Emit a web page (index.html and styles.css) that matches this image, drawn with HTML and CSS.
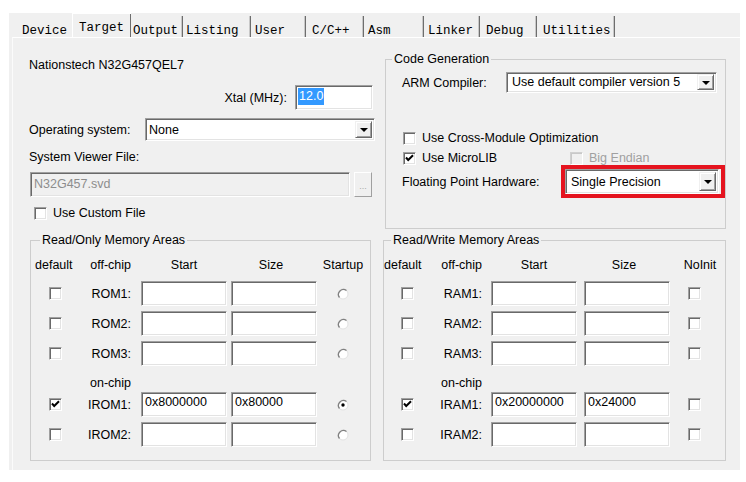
FILE: index.html
```html
<!DOCTYPE html>
<html>
<head>
<meta charset="utf-8">
<link rel="stylesheet" href="styles.css">
</head>
<body>
<div class="dialog">
  <div class="tabs">
    <div class="tab t-device">Device</div>
    <div class="tab tab-active t-target">Target</div>
    <div class="tab t-output">Output</div>
    <div class="tab t-listing">Listing</div>
    <div class="tab t-user">User</div>
    <div class="tab t-cpp">C/C++</div>
    <div class="tab t-asm">Asm</div>
    <div class="tab t-linker">Linker</div>
    <div class="tab t-debug">Debug</div>
    <div class="tab t-util">Utilities</div>
  </div>
  <div class="panel">
    <div class="top-row">
      <div class="target-info">
        <div class="device-name">Nationstech N32G457QEL7</div>
        <div class="xtal-row">
          <span>Xtal (MHz):</span>
          <div class="field xtal"><span class="sel">12.0</span></div>
        </div>
        <div class="os-row">
          <span class="os-label">Operating system:</span>
          <div class="field combo os-combo"><span class="combo-text">None</span><span class="dd-btn"></span></div>
        </div>
        <div class="svf-label">System Viewer File:</div>
        <div class="svd-row">
          <div class="field field-disabled svd">N32G457.svd</div>
          <div class="browse">...</div>
        </div>
        <div class="check-row custom-row"><span class="cb"></span><span>Use Custom File</span></div>
      </div>
      <fieldset class="group codegen">
        <legend>Code Generation</legend>
        <div class="cg-body">
          <div class="compiler-row">
            <span class="cg-label">ARM Compiler:</span>
            <div class="field combo compiler-combo"><span class="combo-text">Use default compiler version 5</span><span class="dd-btn"></span></div>
          </div>
          <div class="check-row cross-row"><span class="cb"></span><span>Use Cross-Module Optimization</span></div>
          <div class="microlib-row">
            <div class="check-row micro"><span class="cb cb-checked"><svg viewBox="0 0 11 11" width="11" height="11"><path d="M2 4.5 L4.2 7 L9 2.2" fill="none" stroke="#000" stroke-width="2"/></svg></span><span>Use MicroLIB</span></div>
            <div class="check-row disabled"><span class="cb cb-disabled"></span><span>Big Endian</span></div>
          </div>
          <div class="fp-row">
            <span>Floating Point Hardware:</span>
            <div class="highlight">
              <div class="field combo fp-combo"><span class="combo-text">Single Precision</span><span class="dd-btn"></span></div>
            </div>
          </div>
        </div>
      </fieldset>
    </div>
    <div class="bottom-row">
      <fieldset class="group mem rom">
        <legend>Read/Only Memory Areas</legend>
        <div class="memgrid">
          <span class="h-default">default</span><span class="h-off">off-chip</span><span class="h-c">Start</span><span class="h-c h-size">Size</span><span class="h-last">Startup</span>

          <span class="cb"></span><span class="lbl">ROM1:</span><span class="field mfield"></span><span class="field mfield"></span><span class="radio"><svg viewBox="0 0 12 12" width="12" height="12"><circle cx="6" cy="6" r="5" fill="#fff" stroke="#e2e2e2"/><path d="M9.5 2.5 A5 5 0 0 0 2.5 9.5" fill="none" stroke="#808080" stroke-width="1.3"/></svg></span>

          <span class="cb"></span><span class="lbl">ROM2:</span><span class="field mfield"></span><span class="field mfield"></span><span class="radio"><svg viewBox="0 0 12 12" width="12" height="12"><circle cx="6" cy="6" r="5" fill="#fff" stroke="#e2e2e2"/><path d="M9.5 2.5 A5 5 0 0 0 2.5 9.5" fill="none" stroke="#808080" stroke-width="1.3"/></svg></span>

          <span class="cb"></span><span class="lbl">ROM3:</span><span class="field mfield"></span><span class="field mfield"></span><span class="radio"><svg viewBox="0 0 12 12" width="12" height="12"><circle cx="6" cy="6" r="5" fill="#fff" stroke="#e2e2e2"/><path d="M9.5 2.5 A5 5 0 0 0 2.5 9.5" fill="none" stroke="#808080" stroke-width="1.3"/></svg></span>

          <span></span><span class="lbl onchip">on-chip</span><span></span><span></span><span></span>

          <span class="cb cb-checked"><svg viewBox="0 0 11 11" width="11" height="11"><path d="M2 4.5 L4.2 7 L9 2.2" fill="none" stroke="#000" stroke-width="2"/></svg></span><span class="lbl">IROM1:</span><span class="field mfield">0x8000000</span><span class="field mfield">0x80000</span><span class="radio"><svg viewBox="0 0 12 12" width="12" height="12"><circle cx="6" cy="6" r="5" fill="#fff" stroke="#e2e2e2"/><path d="M9.5 2.5 A5 5 0 0 0 2.5 9.5" fill="none" stroke="#808080" stroke-width="1.3"/><circle cx="6" cy="6" r="1.7" fill="#000"/></svg></span>

          <span class="cb"></span><span class="lbl">IROM2:</span><span class="field mfield"></span><span class="field mfield"></span><span class="radio"><svg viewBox="0 0 12 12" width="12" height="12"><circle cx="6" cy="6" r="5" fill="#fff" stroke="#e2e2e2"/><path d="M9.5 2.5 A5 5 0 0 0 2.5 9.5" fill="none" stroke="#808080" stroke-width="1.3"/></svg></span>
        </div>
      </fieldset>
      <fieldset class="group mem ram">
        <legend>Read/Write Memory Areas</legend>
        <div class="memgrid">
          <span class="h-default">default</span><span class="h-off">off-chip</span><span class="h-c">Start</span><span class="h-c h-size">Size</span><span class="h-last">NoInit</span>

          <span class="cb"></span><span class="lbl">RAM1:</span><span class="field mfield"></span><span class="field mfield"></span><span class="cb cb-end"></span>

          <span class="cb"></span><span class="lbl">RAM2:</span><span class="field mfield"></span><span class="field mfield"></span><span class="cb cb-end"></span>

          <span class="cb"></span><span class="lbl">RAM3:</span><span class="field mfield"></span><span class="field mfield"></span><span class="cb cb-end"></span>

          <span></span><span class="lbl onchip">on-chip</span><span></span><span></span><span></span>

          <span class="cb cb-checked"><svg viewBox="0 0 11 11" width="11" height="11"><path d="M2 4.5 L4.2 7 L9 2.2" fill="none" stroke="#000" stroke-width="2"/></svg></span><span class="lbl">IRAM1:</span><span class="field mfield">0x20000000</span><span class="field mfield">0x24000</span><span class="cb cb-end"></span>

          <span class="cb"></span><span class="lbl">IRAM2:</span><span class="field mfield"></span><span class="field mfield"></span><span class="cb cb-end"></span>
        </div>
      </fieldset>
    </div>
  </div>
</div>
</body>
</html>
```

FILE: styles.css
```css
html, body {
  margin: 0;
  background: #fff;
}
body {
  font-family: "Liberation Sans", Arial, sans-serif;
  font-size: 12.5px;
  color: #000;
}
.dialog {
  margin: 13px 0 0 9px;
  width: 731px;
  height: 457px;
  background: #f0f0f0;
  display: flex;
  flex-direction: column;
}

/* tabs */
.tabs {
  display: flex;
  height: 24px;
  padding-left: 5px;
  font-family: "Liberation Mono", "Courier New", monospace;
  font-size: 12.5px;
}
.tab {
  box-sizing: border-box;
  height: 24px;
  padding-top: 11px;
  line-height: 14px;
  white-space: pre;
  background-image: linear-gradient(to right, #c8c8c8 1px, #6e6e6e 1px);
  background-size: 2px 21px;
  background-position: right bottom;
  background-repeat: no-repeat;
}
.tab-active {
  padding-top: 8px;
  background-size: 1px 24px;
  box-shadow: inset 1px 0 0 #ffffff, inset 0 1px 0 #ffffff;
}
.t-device { width: 58px; padding-left: 8px; background-image: none; }
.t-target { width: 59px; padding-left: 7px; background-image: linear-gradient(#6e6e6e, #6e6e6e); }
.t-output { width: 52px; padding-left: 2px; }
.t-listing { width: 68px; padding-left: 3px; }
.t-user { width: 55px; padding-left: 4px; }
.t-cpp { width: 58px; padding-left: 6px; }
.t-asm { width: 60px; padding-left: 4px; }
.t-linker { width: 56px; padding-left: 4px; }
.t-debug { width: 57px; padding-left: 6px; }
.t-util { width: 78px; padding-left: 6px; }

/* panel */
.panel {
  flex: 1;
  margin-left: 3px;
  border-top: 1px solid #ffffff;
  border-left: 1px solid #fbfbfb;
  padding-left: 16px;
}
.top-row {
  display: flex;
  gap: 10px;
  align-items: flex-start;
}
.target-info {
  width: 346px;
  margin-top: 19px;
  display: flex;
  flex-direction: column;
}
.device-name {
  line-height: 16px;
}
.xtal-row {
  display: flex;
  justify-content: flex-end;
  align-items: center;
  gap: 8px;
  margin-top: 12px;
  padding-right: 2px;
}
.field {
  box-sizing: border-box;
  background: #fff;
  border: 1px solid;
  border-color: #a0a0a0 #ffffff #ffffff #a0a0a0;
  box-shadow: inset 1px 1px 0 #696969, inset -1px -1px 0 #e3e3e3;
}
.xtal {
  width: 78px;
  height: 25px;
  padding: 3px 0 0 2px;
  line-height: 15px;
}
.sel {
  background: #3399ff;
  color: #fff;
  padding: 1px 1px 2px 1px;
}
.os-row {
  display: flex;
  align-items: center;
  margin-top: 8px;
}
.os-label {
  width: 116px;
}
.combo {
  display: flex;
  align-items: stretch;
  padding: 2px;
}
.combo-text {
  flex: 1;
  padding-left: 1px;
  display: flex;
  align-items: center;
  white-space: nowrap;
}
.dd-btn {
  width: 17px;
  box-sizing: border-box;
  background: #f0f0f0;
  border: 1px solid;
  border-color: #f0f0f0 #696969 #696969 #f0f0f0;
  box-shadow: inset 1px 1px 0 #ffffff, inset -1px -1px 0 #a0a0a0;
  display: flex;
  align-items: center;
  justify-content: center;
}
.dd-btn::after {
  content: "";
  border-left: 4px solid transparent;
  border-right: 4px solid transparent;
  border-top: 4px solid #000;
  margin-top: 1px;
}
.os-combo {
  width: 230px;
  height: 23px;
}
.svf-label {
  margin-top: 8px;
  line-height: 16px;
}
.svd-row {
  display: flex;
  margin-top: 7px;
  margin-left: 1px;
  gap: 4px;
}
.svd {
  width: 320px;
  height: 25px;
  padding: 4px 0 0 3px;
  line-height: 15px;
}
.field-disabled {
  background: #f0f0f0;
  color: #8d8d8d;
}
.browse {
  box-sizing: border-box;
  width: 18px;
  height: 25px;
  border: 1px solid;
  border-color: #ffffff #a0a0a0 #a0a0a0 #ffffff;
  color: #a8a8a8;
  font-size: 9px;
  text-align: center;
  line-height: 26px;
}
.check-row {
  display: flex;
  align-items: center;
  gap: 6px;
  height: 14px;
}
.custom-row {
  margin-top: 9px;
  margin-left: 5px;
}
.cb {
  box-sizing: border-box;
  width: 13px;
  height: 13px;
  flex: none;
  background: #fff;
  border: 1px solid;
  border-color: #a0a0a0 #ffffff #ffffff #a0a0a0;
  box-shadow: inset 1px 1px 0 #696969, inset -1px -1px 0 #e3e3e3;
  display: flex;
  align-items: center;
  justify-content: center;
}
.cb svg {
  display: block;
}
.cb-disabled {
  background: #f0f0f0;
  box-shadow: inset 1px 1px 0 #c8c8c8;
  border-color: #d0d0d0 #ffffff #ffffff #d0d0d0;
}
.disabled {
  color: #a0a0a0;
}

/* group boxes */
.group {
  margin: 0;
  padding: 0;
  box-sizing: border-box;
  border: 1px solid #cdcdcd;
  min-width: 0;
}
.group legend {
  padding: 0 2px;
  line-height: 14px;
}
.codegen {
  width: 341px;
  margin-top: 14px;
}
.codegen legend {
  margin-left: 6px;
}
.cg-body {
  padding: 6px 0 30px 16px;
}
.compiler-row {
  display: flex;
  align-items: center;
}
.cg-label {
  width: 104px;
}
.compiler-combo {
  width: 211px;
  height: 21px;
  padding: 1px 2px 2px 2px;
}
.compiler-combo .combo-text {
  padding-left: 3px;
}
.cross-row {
  margin-top: 38px;
  margin-left: 1px;
}
.microlib-row {
  display: flex;
  margin-top: 6px;
}
.micro {
  width: 167px;
  margin-left: 1px;
}
.fp-row {
  display: flex;
  align-items: center;
  height: 33px;
}
.highlight {
  margin-left: auto;
  box-sizing: border-box;
  width: 164px;
  height: 33px;
  border: 4px solid #e5141f;
  padding: 0 2px 0 0;
}
.fp-combo {
  width: 100%;
  height: 25px;
}
.fp-combo .combo-text {
  padding-left: 3px;
}

/* memory areas */
.bottom-row {
  display: flex;
  gap: 12px;
  margin-top: 4px;
  margin-left: 1px;
}
.mem.rom {
  width: 341px;
}
.mem.ram {
  width: 343px;
}
.rom legend {
  margin-left: 9px;
}
.ram legend {
  margin-left: 7px;
}
.memgrid {
  display: grid;
  grid-template-rows: 18px 25px 25px 25px 16px 25px 25px;
  row-gap: 5px;
  align-items: center;
  padding-top: 11px;
  padding-bottom: 13px;
}
.rom .memgrid {
  grid-template-columns: 42px 64px 90px 90px 44px;
  padding-left: 4px;
}
.ram .memgrid {
  grid-template-columns: 50px 57px 93px 93px 40px;
}
.memgrid > span {
  line-height: 14px;
}
.h-default,
.h-off,
.h-c,
.h-last {
  align-self: start;
}
.h-off,
.lbl {
  text-align: right;
}
.rom .h-off,
.rom .lbl {
  padding-right: 10px;
}
.ram .h-off,
.ram .lbl {
  padding-right: 9px;
}
.h-c {
  width: 86px;
  text-align: center;
}
.h-size {
  width: 80px;
}
.h-last {
  justify-self: center;
  white-space: nowrap;
}
.ram .h-last {
  margin-left: 6px;
}
.rom .cb {
  margin-left: 14px;
}
.ram .cb {
  margin-left: 17px;
}
.ram .cb-end {
  margin-left: 11px;
}
.mfield {
  width: 86px;
  height: 25px;
  padding: 2px 0 0 3px;
  line-height: 15px !important;
}
.radio {
  justify-self: center;
  display: flex;
}
.onchip {
  align-self: end;
  margin-bottom: -3px;
}
```
